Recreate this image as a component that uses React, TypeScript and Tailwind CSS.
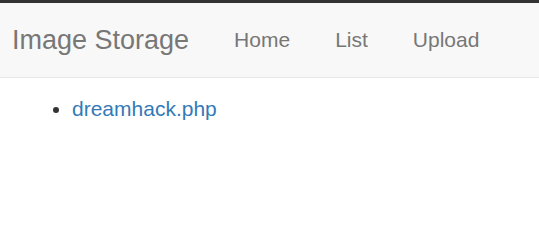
export default function App() {
  return (
    <div className="min-h-screen bg-white font-['Liberation_Sans',Arial,sans-serif] text-[21px] leading-[30px] text-[#333]">
      {/* top strip */}
      <div className="h-[3px] bg-[#333]" />

      {/* Navbar */}
      <nav className="flex h-[75px] items-center border-b border-[#e7e7e7] bg-[#f8f8f8] pl-[12px]">
        <a href="#" className="pr-[22.5px] text-[27px] text-[#777]">
          Image Storage
        </a>
        <ul className="flex">
          <li>
            <a href="#" className="block px-[22.5px] text-[#777]">Home</a>
          </li>
          <li>
            <a href="#" className="block px-[22.5px] text-[#777]">List</a>
          </li>
          <li>
            <a href="#" className="block px-[22.5px] text-[#777]">Upload</a>
          </li>
        </ul>
      </nav>

      {/* File list */}
      <div className="pl-[12px] pt-[16px]">
        <ul className="list-disc pl-[60px]">
          <li>
            <a href="#" className="text-[#337ab7]">dreamhack.php</a>
          </li>
        </ul>
      </div>
    </div>
  );
}
